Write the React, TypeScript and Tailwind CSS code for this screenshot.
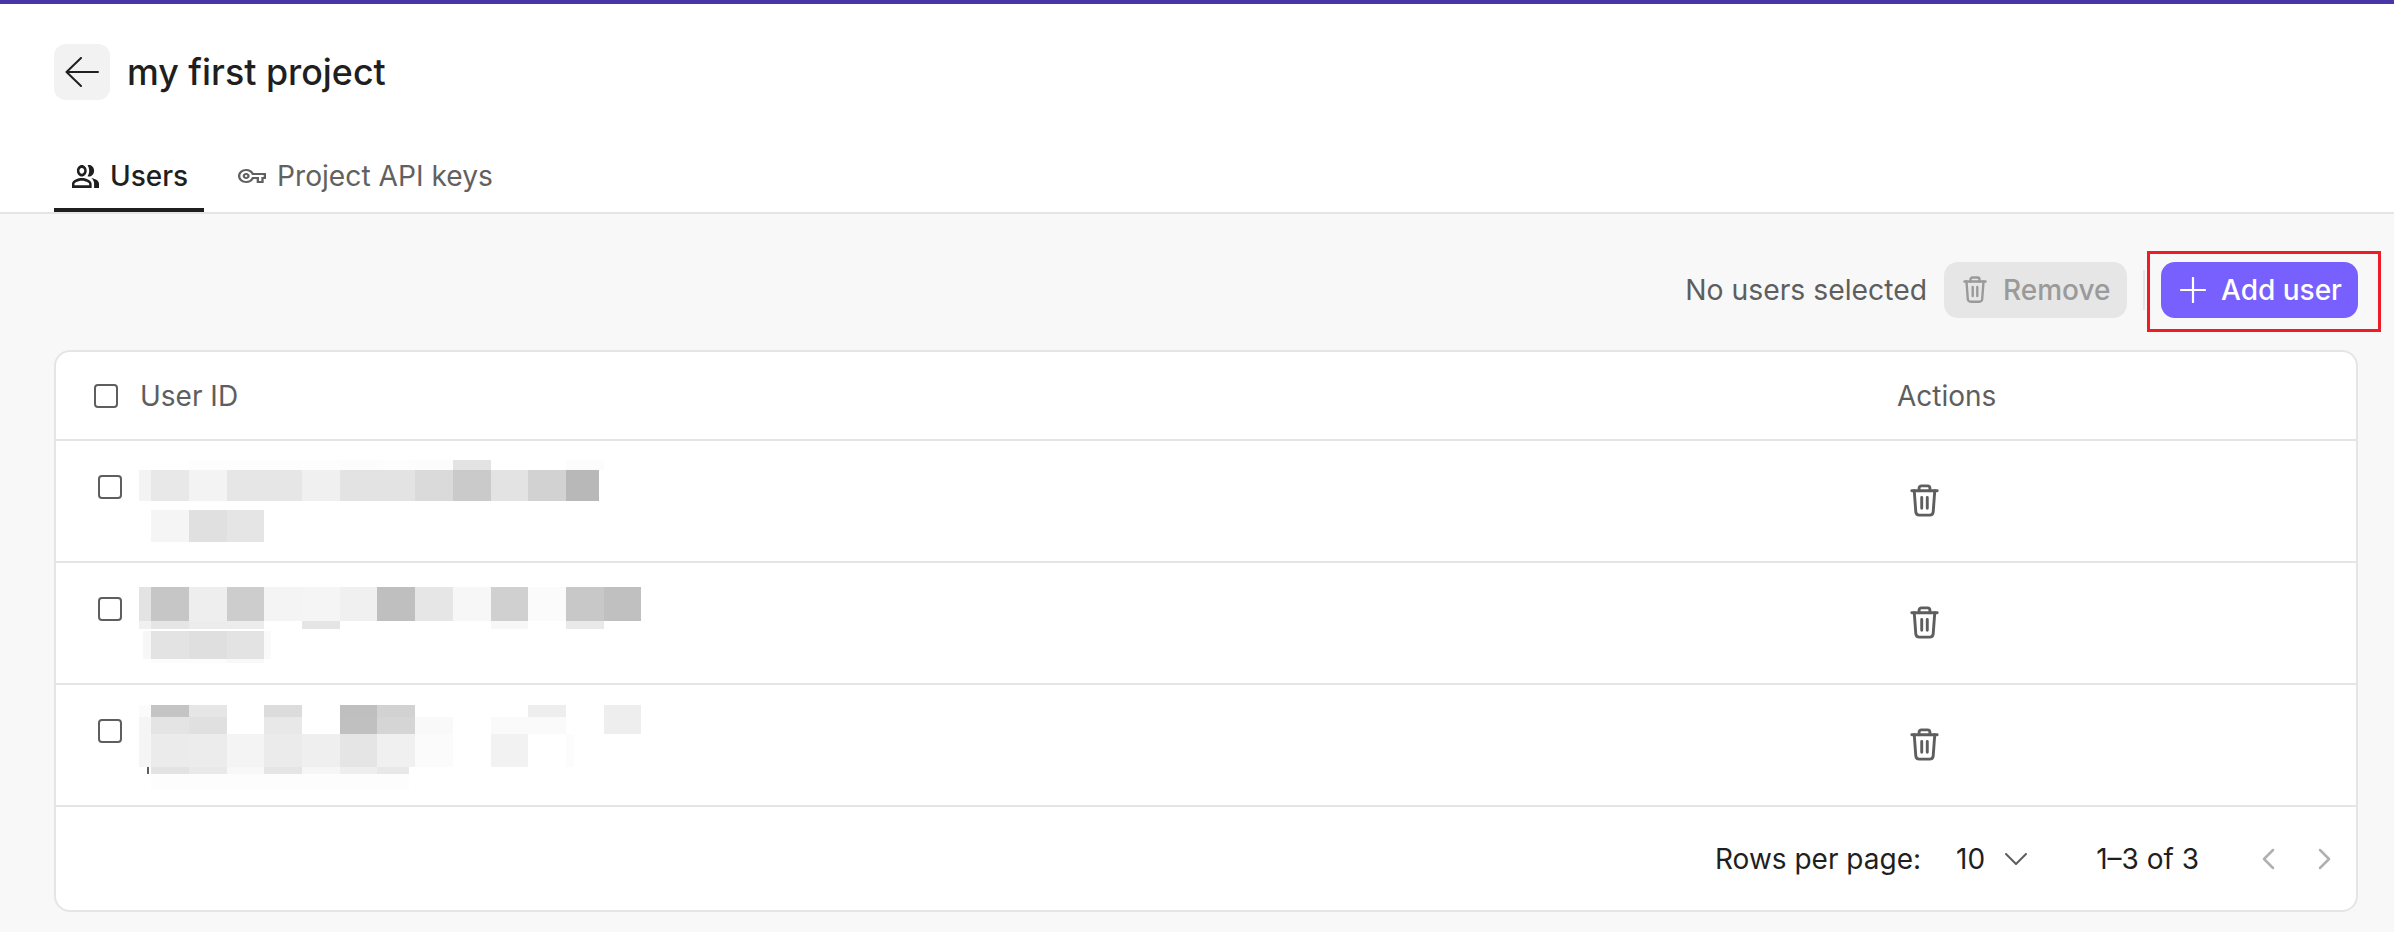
import React from "react";

const W = ["w-[38px]", "w-[38px]", "w-[37px]", "w-[38px]", "w-[38px]", "w-[37px]", "w-[38px]", "w-[38px]", "w-[38px]", "w-[37px]", "w-[38px]", "w-[38px]", "w-[37px]"];

function Mosaic({ h, lead, cells }: { h: string; lead?: [string, string]; cells: string[] }) {
  return (
    <div className={`flex ${h}`}>
      <div className="w-[12px] flex justify-end">
        {lead ? <div className={`${lead[0]} ${lead[1]}`} /> : null}
      </div>
      {cells.map((c, i) => (
        <div key={i} className={`${W[i]} ${c}`} />
      ))}
    </div>
  );
}

function Trash({ className }: { className?: string }) {
  return (
    <svg viewBox="0 0 24 28" fill="none" stroke="currentColor" strokeWidth="2.4" strokeLinecap="round" strokeLinejoin="round" className={className}>
      <path d="M1.5 5.500h21" />
      <path d="M7.500 5.500V3.500a2 2 0 0 1 2-2h5a2 2 0 0 1 2 2v2" />
      <path d="M3.500 5.500l1.300 17.500a3 3 0 0 0 3 2.700h8.400a3 3 0 0 0 3-2.700L20.500 5.500" />
      <path d="M9.700 11v9M14.300 11v9" />
    </svg>
  );
}

function Check() {
  return <div className="size-6 rounded-[4px] border-[2.5px] border-[#5e5e5e] bg-white" />;
}

function Row({ children, top }: { children: React.ReactNode; top: string }) {
  return (
    <div className="flex h-[122px] border-b-2 border-[#e5e5e5]">
      <div className="w-[1840px] pl-[42px] flex">
        <div className="pt-[34px] w-[42px] shrink-0"><Check /></div>
        <div className={`w-[520px] -ml-[1px] ${top}`}>{children}</div>
      </div>
      <div className="flex-1 flex items-center pl-[14px] text-[#5e5e5e]">
        <Trash className="w-[29px] h-[34px]" />
      </div>
    </div>
  );
}

export default function App() {
  return (
    <div className="w-[2394px] h-[932px] overflow-hidden bg-[#f8f8f8] font-['Inter',sans-serif] text-[#1f1f1f]">
      <div className="h-[4px] bg-[#4a35a8]" />
      <header className="h-[210px] bg-white border-b-2 border-[#e5e5e5] px-[54px] flex flex-col">
        <div className="flex items-center gap-[17px] pt-[40px]">
          <button className="size-[56px] rounded-[12px] bg-[#f2f2f2] flex items-center justify-center text-[#1f1f1f]">
            <svg viewBox="0 0 34 30" fill="none" stroke="currentColor" strokeWidth="2" strokeLinecap="round" strokeLinejoin="round" className="w-[34px] h-[30px]">
              <path d="M33 15H1.500M16 1L1.500 15L16 29" />
            </svg>
          </button>
          <h1 className="text-[35.8px] leading-[56px] font-medium">my first project</h1>
        </div>
        <nav className="flex mt-auto">
          <div className="h-[60px] w-[150px] border-b-4 border-[#1f1f1f] flex items-center pl-[18px] gap-[11px] pb-[8px] text-[28px] font-medium">
            <svg viewBox="1 4 22 16" preserveAspectRatio="none" fill="currentColor" className="w-[27px] h-[23px]">
              <path d="M16.670 13.130C18.040 14.060 19 15.320 19 17v3h4v-3c0-2.180-3.570-3.470-6.330-3.870z" />
              <path d="M15 12c2.210 0 4-1.790 4-4s-1.790-4-4-4c-.47 0-.91.1-1.330.24C14.500 5.270 15 6.580 15 8s-.5 2.730-1.330 3.760c.42.14.86.24 1.330.24z" />
              <path d="M9 12c2.210 0 4-1.790 4-4s-1.790-4-4-4-4 1.790-4 4 1.790 4 4 4zm0-6c1.100 0 2 .9 2 2s-.9 2-2 2-2-.9-2-2 .9-2 2-2z" />
              <path d="M9 13c-2.670 0-8 1.340-8 4v3h16v-3c0-2.660-5.330-4-8-4zm6 5H3v-.99C3.200 16.290 6.300 15 9 15s5.800 1.290 6 2v1z" />
            </svg>
            Users
          </div>
          <div className="h-[60px] flex items-center ml-[34px] gap-[11px] pb-[12px] text-[28.2px] text-[#616161]">
            <svg viewBox="0 5 24 14" preserveAspectRatio="none" fill="currentColor" className="w-[28px] h-[14px]">
              <path d="M22 19h-6v-4h-2.680c-1.140 2.420-3.600 4-6.320 4-3.860 0-7-3.140-7-7s3.140-7 7-7c2.720 0 5.170 1.580 6.320 4H24v6h-2v4zm-4-2h2v-4h2v-2H11.940l-.23-.67C11.010 8.340 9.110 7 7 7c-2.760 0-5 2.240-5 5s2.240 5 5 5c2.110 0 4.010-1.340 4.710-3.330l.23-.67H18v4zM7 15c-1.650 0-3-1.350-3-3s1.350-3 3-3 3 1.350 3 3-1.350 3-3 3zm0-4c-.55 0-1 .45-1 1s.45 1 1 1 1-.45 1-1-.45-1-1-1z" />
            </svg>
            Project API keys
          </div>
        </nav>
      </header>

      <main className="px-[54px] pr-[36px]">
        <div className="flex items-center justify-end h-[136px] pt-[16px] w-[2304px]">
          <span className="text-[28.3px] text-[#5e5e5e] mr-[17px]">No users selected</span>
          <button className="h-[56px] w-[183px] rounded-[14px] bg-[#e6e6e6] flex items-center pl-[19px] gap-[16px] text-[28px] text-[#9a9a9a] font-medium">
            <Trash className="w-[24px] h-[28px]" />
            Remove
          </button>
          <div className="w-[2px] h-[40px] bg-[#e6e6e6] ml-[16px]" />
          <div className="relative ml-[16px]">
            <button className="h-[56px] w-[197px] rounded-[14px] bg-[#7860ff] flex items-center pl-[19px] gap-[15px] text-[28px] text-white font-medium">
              <svg viewBox="0 0 26 26" fill="none" stroke="currentColor" strokeWidth="2.2" strokeLinecap="round" className="size-[26px]">
                <path d="M13 1v24M1 13h24" />
              </svg>
              Add user
            </button>
            <div className="absolute -left-[14px] -right-[23px] -top-[11px] -bottom-[14px] border-[3px] border-[#ee1c25]" />
          </div>
        </div>

        <section className="w-[2304px] h-[562px] bg-white border-2 border-[#e5e5e5] rounded-[16px] overflow-hidden">
          <div className="flex h-[89px] border-b-2 border-[#e5e5e5] text-[28px] text-[#5e5e5e]">
            <div className="w-[1840px] flex items-center pl-[38px] gap-[22px]">
              <Check />
              <span className="pt-[1px]">User ID</span>
            </div>
            <div className="flex-1 flex items-center pl-[1px]"><span className="pt-[1px]">Actions</span></div>
          </div>

          <Row top="pt-[19px]">
            <Mosaic h="h-[10px]" cells={["", "bg-[#fdfdfd]", "bg-[#fdfdfd]", "bg-[#fdfdfd]", "bg-[#fdfdfd]", "bg-[#fcfcfc]", "bg-[#fdfdfd]", "bg-[#fcfcfc]", "bg-[#e3e3e3]", "", "", "bg-[#fcfcfc]"]} />
            <Mosaic h="h-[31px]" lead={["w-[12px]", "bg-[#f3f3f3]"]} cells={["bg-[#e8e8e8]", "bg-[#f3f3f3]", "bg-[#e6e6e6]", "bg-[#e6e6e6]", "bg-[#f0f0f0]", "bg-[#e3e3e3]", "bg-[#e3e3e3]", "bg-[#dadada]", "bg-[#cacaca]", "bg-[#e3e3e3]", "bg-[#d2d2d2]", "bg-[#b8b8b8] !w-[33px]"]} />
            <div className="h-[9px]" />
            <Mosaic h="h-[32px]" cells={["bg-[#f5f5f5]", "bg-[#e0e0e0]", "bg-[#e5e5e5]"]} />
          </Row>

          <Row top="pt-[24px]">
            <Mosaic h="h-[34px]" lead={["w-[14px]", "bg-[#e3e3e3]"]} cells={["bg-[#c6c6c6]", "bg-[#eeeeee]", "bg-[#cdcdcd]", "bg-[#f4f4f4]", "bg-[#f5f5f5]", "bg-[#f0f0f0]", "bg-[#bfbfbf]", "bg-[#e6e6e6]", "bg-[#f7f7f7]", "bg-[#d0d0d0]", "bg-[#fbfbfb]", "bg-[#c8c8c8]", "bg-[#c0c0c0]"]} />
            <Mosaic h="h-[8px]" lead={["w-[14px]", "bg-[#f0f0f0]"]} cells={["bg-[#e5e5e5]", "bg-[#ececec]", "bg-[#ececec]", "", "bg-[#e5e5e5]", "", "", "", "", "bg-[#f7f7f7]", "", "bg-[#e9e9e9]"]} />
            <div className="h-[2px]" />
            <Mosaic h="h-[28px]" lead={["w-[8px]", "bg-[#f7f7f7]"]} cells={["bg-[#e3e3e3]", "bg-[#dfdfdf]", "bg-[#e3e3e3]", "!w-[7px] bg-[#fafafa]"]} />
            <Mosaic h="h-[4px]" cells={["bg-[#fcfcfc]", "bg-[#fcfcfc]", "bg-[#f8f8f8]"]} />
          </Row>

          <Row top="pt-[20px]">
            <Mosaic h="h-[12px]" lead={["w-[17px]", "bg-[#fbfbfb]"]} cells={["bg-[#c4c4c4]", "bg-[#e6e6e6]", "", "bg-[#dcdcdc]", "", "bg-[#bfbfbf]", "bg-[#d2d2d2]", "", "", "", "bg-[#eeeeee]", "", "bg-[#eeeeee]"]} />
            <Mosaic h="h-[17px]" lead={["w-[16px]", "bg-[#f5f5f5]"]} cells={["bg-[#e4e4e4]", "bg-[#e0e0e0]", "", "bg-[#e8e8e8]", "", "bg-[#c0c0c0]", "bg-[#d5d5d5]", "bg-[#f9f9f9]", "", "bg-[#fafafa]", "bg-[#fafafa]", "", "bg-[#eeeeee]"]} />
            <Mosaic h="h-[33px]" lead={["w-[16px]", "bg-[#f5f5f5]"]} cells={["bg-[#ebebeb]", "bg-[#ececec]", "bg-[#f4f4f4]", "bg-[#ebebeb]", "bg-[#efefef]", "bg-[#e5e5e5]", "bg-[#f0f0f0]", "bg-[#fbfbfb]", "", "bg-[#f2f2f2]", "", "!w-[8px] bg-[#fcfcfc]"]} />
            <Mosaic h="h-[7px]" lead={["w-[2px] mr-[2px]", "bg-[#5e5e5e]"]} cells={["bg-[#e3e3e3]", "bg-[#e9e9e9]", "bg-[#f8f8f8]", "bg-[#e5e5e5]", "bg-[#f6f6f6]", "bg-[#eeeeee]", "!w-[32px] bg-[#e8e8e8]"]} />
            <Mosaic h="h-[15px]" cells={["bg-[#fdfdfd]", "bg-[#fdfdfd]", "bg-[#fdfdfd]", "bg-[#fdfdfd]", "bg-[#fdfdfd]", "bg-[#fdfdfd]", "!w-[32px] bg-[#fdfdfd]"]} />
          </Row>

          <div className="flex items-center h-[104px] pl-[1659px] text-[28px] text-[#1f1f1f]">
            <span>Rows per page:</span>
            <span className="ml-[35px]">10</span>
            <svg viewBox="0 0 22 12" fill="none" stroke="#5e5e5e" strokeWidth="2" strokeLinecap="round" strokeLinejoin="round" className="w-[22px] h-[12px] ml-[20px]">
              <path d="M1 1l10 10L21 1" />
            </svg>
            <span className="ml-[69px]">1–3 of 3</span>
            <svg viewBox="0 0 14 22" fill="none" stroke="#b0b0b0" strokeWidth="2.5" strokeLinecap="round" strokeLinejoin="round" className="w-[14px] h-[22px] ml-[62px]">
              <path d="M12 2L3 11l9 9" />
            </svg>
            <svg viewBox="0 0 14 22" fill="none" stroke="#b0b0b0" strokeWidth="2.5" strokeLinecap="round" strokeLinejoin="round" className="w-[14px] h-[22px] ml-[43px]">
              <path d="M2 2l9 9-9 9" />
            </svg>
          </div>
        </section>
      </main>
    </div>
  );
}
